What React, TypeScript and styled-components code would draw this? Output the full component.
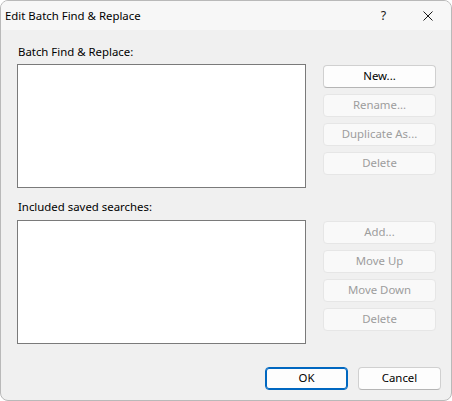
import React from "react";
import styled, { createGlobalStyle } from "styled-components";

const Global = createGlobalStyle`
  html, body {
    margin: 0;
    padding: 0;
    background: #ffffff;
  }
  * { box-sizing: border-box; }
`;

const uiFont = `"Segoe UI", "Noto Sans", "Open Sans", sans-serif`;
const uiSize = "11.4px";

const Window = styled.div`
  width: 452px;
  height: 401px;
  border: 1px solid #b9b9b9;
  border-radius: 8px;
  overflow: hidden;
  background: #f0f0f0;
  display: flex;
  flex-direction: column;
  font-family: ${uiFont};
  font-size: ${uiSize};
  color: #000;
`;

const TitleBar = styled.div`
  height: 29px;
  flex: none;
  display: flex;
  align-items: center;
  background: #f7f7f7;
`;

const Title = styled.div`
  flex: 1;
  padding-left: 4px;
  padding-bottom: 1px;
  color: #000;
  white-space: nowrap;
`;

const CaptionButton = styled.div`
  width: 46px;
  height: 29px;
  display: flex;
  align-items: center;
  justify-content: center;
  color: #1a1a1a;
  font-size: 12.5px;
`;

const HelpButton = styled(CaptionButton)`
  padding-left: 3px;
`;

const Content = styled.div`
  flex: 1;
  padding: 14px 14px 0 16px;
  display: flex;
  flex-direction: column;
`;

const Section = styled.div<{ $top: number }>`
  display: grid;
  grid-template-columns: 289px 114px;
  column-gap: 17px;
  margin-top: ${(p) => p.$top}px;
`;

const Label = styled.div<{ $gap: number }>`
  grid-column: 1 / 2;
  line-height: 16px;
  height: 16px;
  margin-bottom: ${(p) => p.$gap}px;
  padding-left: 1px;
  white-space: nowrap;
`;

const ListBox = styled.div`
  grid-column: 1 / 2;
  height: 124px;
  background: #ffffff;
  border: 1px solid #7a7a7a;
`;

const ButtonColumn = styled.div<{ $offset: number }>`
  grid-column: 2 / 3;
  display: flex;
  flex-direction: column;
  gap: 6px;
  margin-top: ${(p) => p.$offset}px;
`;

const Button = styled.button<{ $width?: number; $default?: boolean }>`
  width: ${(p) => (p.$width ? `${p.$width}px` : "113px")};
  height: 23px;
  padding: 0 0 1px;
  font-family: ${uiFont};
  font-size: ${uiSize};
  line-height: 20px;
  border-radius: 4px;
  color: #000;
  background: #fdfdfd;
  border: 1px solid #d0d0d0;
  border-bottom-color: #b5b5b5;
  ${(p) =>
    p.$default &&
    `
    border: 1px solid #0067c0;
    box-shadow: inset 0 0 0 1px #0067c0;
    background: #fdfdfd;
  `}
  &:disabled {
    color: #9d9d9d;
    background: #f9f9f9;
    border: 1px solid #e6e6e6;
  }
`;

const Footer = styled.div`
  margin-top: 23px;
  display: flex;
  justify-content: flex-end;
  gap: 10px;
  margin-right: -4px;
`;

const CloseIcon = () => (
  <svg width="10" height="10" viewBox="0 0 10 10" fill="none">
    <path d="M0.5 0.5 L9.5 9.5 M9.5 0.5 L0.5 9.5" stroke="#1a1a1a" strokeWidth="1" />
  </svg>
);

export default function App() {
  return (
    <>
      <Global />
      <Window>
        <TitleBar>
          <Title>Edit Batch Find &amp; Replace</Title>
          <HelpButton>?</HelpButton>
          <CaptionButton>
            <CloseIcon />
          </CaptionButton>
        </TitleBar>
        <Content>
          <Section $top={0}>
            <Label $gap={4}>Batch Find &amp; Replace:</Label>
            <ListBox />
            <ButtonColumn $offset={1}>
              <Button>New...</Button>
              <Button disabled>Rename...</Button>
              <Button disabled>Duplicate As...</Button>
              <Button disabled>Delete</Button>
            </ButtonColumn>
          </Section>
          <Section $top={11}>
            <Label $gap={5}>Included saved searches:</Label>
            <ListBox />
            <ButtonColumn $offset={1}>
              <Button disabled>Add...</Button>
              <Button disabled>Move Up</Button>
              <Button disabled>Move Down</Button>
              <Button disabled>Delete</Button>
            </ButtonColumn>
          </Section>
          <Footer>
            <Button $width={83} $default>
              OK
            </Button>
            <Button $width={83}>Cancel</Button>
          </Footer>
        </Content>
      </Window>
    </>
  );
}
